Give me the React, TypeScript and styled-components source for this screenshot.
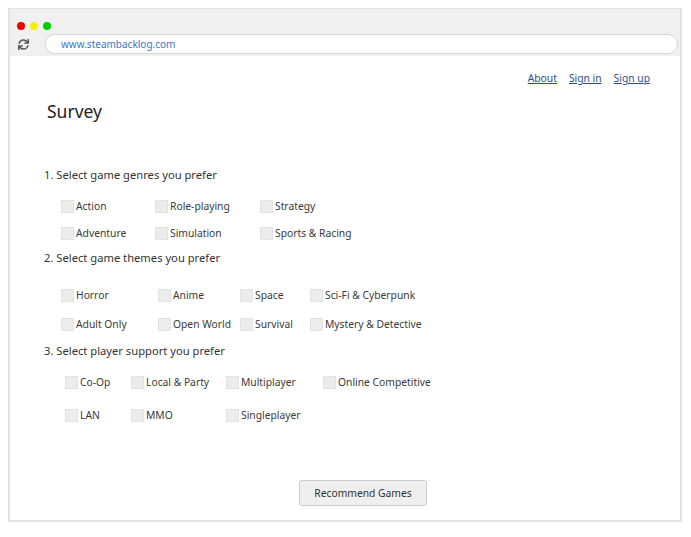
import { createGlobalStyle, styled } from "styled-components";
import { FaSync } from "react-icons/fa";

const GlobalStyle = createGlobalStyle`
  body {
    margin: 0;
    background: #ffffff;
    font-family: "Noto Sans", "Open Sans", sans-serif;
    color: #333333;
  }
`;

const genres = ["Action", "Role-playing", "Strategy", "Adventure", "Simulation", "Sports & Racing"];
const themes = [
  "Horror",
  "Anime",
  "Space",
  "Sci-Fi & Cyberpunk",
  "Adult Only",
  "Open World",
  "Survival",
  "Mystery & Detective",
];
const support = ["Co-Op", "Local & Party", "Multiplayer", "Online Competitive", "LAN", "MMO", "Singleplayer"];

const App = () => {
  return (
    <>
      <GlobalStyle />
      <Window>
        <TopBar>
          <Dots>
            <Dot $color="#f00000" />
            <Dot $color="#f5f000" />
            <Dot $color="#00d000" />
          </Dots>
          <AddressRow>
            <FaSync size={11} color="#555" />
            <AddressBar>www.steambacklog.com</AddressBar>
          </AddressRow>
        </TopBar>
        <Page>
          <Nav>
            <NavLink href="#">About</NavLink>
            <NavLink href="#">Sign in</NavLink>
            <NavLink href="#">Sign up</NavLink>
          </Nav>
          <Title>Survey</Title>
          <Question $top={43}>1. Select game genres you prefer</Question>
          <Options $cols="94px 105px 1fr" $top={15} $gap={11} $left={17}>
            {genres.map((g) => (
              <Option key={g}>
                <Box />
                {g}
              </Option>
            ))}
          </Options>
          <Question $top={9}>2. Select game themes you prefer</Question>
          <Options $cols="97px 82px 70px 1fr" $top={21} $gap={13} $left={17}>
            {themes.map((t) => (
              <Option key={t}>
                <Box />
                {t}
              </Option>
            ))}
          </Options>
          <Question $top={11}>3. Select player support you prefer</Question>
          <Options $cols="66px 95px 97px 1fr" $top={15} $gap={17} $left={21}>
            {support.map((s) => (
              <Option key={s}>
                <Box />
                {s}
              </Option>
            ))}
          </Options>
          <Footer>
            <Button>Recommend Games</Button>
          </Footer>
        </Page>
      </Window>
    </>
  );
};

export default App;

const Window = styled.div`
  margin: 8px 0 0 8px;
  width: 670px;
  height: 511px;
  border: 2px solid #e2e2e2;
  border-top-width: 1px;
  display: flex;
  flex-direction: column;
  background: #ffffff;
`;

const TopBar = styled.div`
  height: 47px;
  background: #f0f0f0;
  display: flex;
  flex-direction: column;
  padding: 13px 0 0 7px;
  box-sizing: border-box;
`;

const Dots = styled.div`
  display: flex;
  gap: 5px;
`;

const Dot = styled.span<{ $color: string }>`
  width: 8px;
  height: 8px;
  border-radius: 50%;
  background: ${(p) => p.$color};
`;

const AddressRow = styled.div`
  display: flex;
  align-items: center;
  gap: 16px;
  margin-top: 4px;
  padding-left: 1px;
`;

const AddressBar = styled.div`
  flex: 1;
  height: 18px;
  margin-right: 2px;
  border: 1px solid #d6d6d6;
  border-radius: 10px;
  background: #ffffff;
  font-size: 10px;
  line-height: 18px;
  color: #3b78d0;
  padding-left: 15px;
`;

const Page = styled.div`
  flex: 1;
  display: flex;
  flex-direction: column;
  padding: 14px 0 0 34px;
`;

const Nav = styled.div`
  display: flex;
  justify-content: flex-end;
  gap: 12px;
  padding-right: 30px;
`;

const NavLink = styled.a`
  font-size: 10.3px;
  line-height: 16px;
  color: #2a4f92;
  text-decoration: underline;
`;

const Title = styled.h1`
  margin: 12px 0 0 3px;
  font-size: 17.5px;
  font-weight: 400;
  line-height: 26px;
  color: #222222;
`;

const Question = styled.div<{ $top: number }>`
  margin-top: ${(p) => p.$top}px;
  font-size: 11.2px;
  line-height: 16px;
  color: #333333;
`;

const Options = styled.div<{ $cols: string; $top: number; $gap: number; $left: number }>`
  display: grid;
  grid-template-columns: ${(p) => p.$cols};
  row-gap: ${(p) => p.$gap}px;
  margin-top: ${(p) => p.$top}px;
  padding-left: ${(p) => p.$left}px;
`;

const Option = styled.label`
  display: flex;
  align-items: center;
  gap: 2px;
  font-size: 10.3px;
  line-height: 16px;
  color: #3a3a3a;
  white-space: nowrap;
`;

const Box = styled.span`
  width: 11px;
  height: 11px;
  background: #ececec;
  border: 1px solid #e2e2e2;
`;

const Footer = styled.div`
  display: flex;
  justify-content: center;
  margin-top: 57px;
  padding-left: 2px;
`;

const Button = styled.button`
  width: 128px;
  height: 26px;
  background: #efefef;
  border: 1px solid #cccccc;
  border-radius: 3px;
  font-family: "Noto Sans", "Open Sans", sans-serif;
  font-size: 10.3px;
  color: #333333;
`;
